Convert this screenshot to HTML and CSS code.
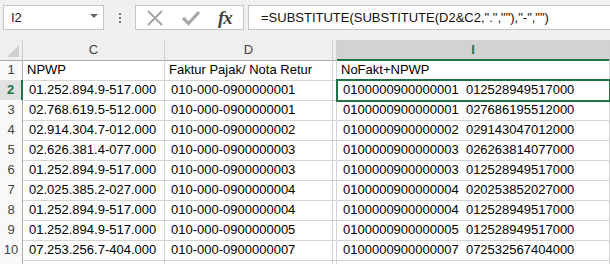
FILE: index.html
```html
<!DOCTYPE html>
<html lang="id">
<head>
    <meta charset="UTF-8">
    <title>SUBSTITUTE</title>
    <link rel="stylesheet" href="styles.css">
</head>
<body>
    <!-- formula bar -->
    <div class="formula-bar">
        <div class="name-box">
            <span>I2</span>
            <span class="caret"></span>
        </div>
        <div class="grip">
            <svg width="4" height="12" viewBox="0 0 4 12"><rect x="1" y="1" width="2" height="2" fill="#777"/><rect x="1" y="5" width="2" height="2" fill="#777"/><rect x="1" y="9" width="2" height="2" fill="#777"/></svg>
        </div>
        <div class="fx-buttons">
            <svg class="btn-x" width="18" height="18" viewBox="0 0 18 18"><path d="M2 2 L16 16 M16 2 L2 16" stroke="#a6a6a6" stroke-width="2" fill="none"/></svg>
            <svg class="btn-ok" width="20" height="18" viewBox="0 0 20 18"><path d="M2 9 L7.5 14.5 L18 3" stroke="#a6a6a6" stroke-width="3.2" fill="none"/></svg>
            <span class="fx">fx</span>
        </div>
        <div class="formula">=SUBSTITUTE(SUBSTITUTE(D2&amp;C2,".",""),"-","")</div>
    </div>

    <!-- sheet -->
    <div class="sheet">
        <div class="row head">
            <div class="corner"></div>
            <div class="col">C</div>
            <div class="col">D</div>
            <div class="hidden-cols"></div>
            <div class="col active">I</div>
        </div>
        <div class="row">
            <div class="rh">1</div>
            <div class="cell title">NPWP</div>
            <div class="cell title">Faktur Pajak/ Nota Retur</div>
            <div class="hidden-cols"></div>
            <div class="cell title">NoFakt+NPWP</div>
        </div>
        <div class="row">
            <div class="rh active">2</div>
            <div class="cell">01.252.894.9-517.000</div>
            <div class="cell">010-000-0900000001</div>
            <div class="hidden-cols"></div>
            <div class="cell selected">0100000900000001  012528949517000</div>
        </div>
        <div class="row">
            <div class="rh">3</div>
            <div class="cell">02.768.619.5-512.000</div>
            <div class="cell">010-000-0900000001</div>
            <div class="hidden-cols"></div>
            <div class="cell">0100000900000001  027686195512000</div>
        </div>
        <div class="row">
            <div class="rh">4</div>
            <div class="cell">02.914.304.7-012.000</div>
            <div class="cell">010-000-0900000002</div>
            <div class="hidden-cols"></div>
            <div class="cell">0100000900000002  029143047012000</div>
        </div>
        <div class="row">
            <div class="rh">5</div>
            <div class="cell">02.626.381.4-077.000</div>
            <div class="cell">010-000-0900000003</div>
            <div class="hidden-cols"></div>
            <div class="cell">0100000900000003  026263814077000</div>
        </div>
        <div class="row">
            <div class="rh">6</div>
            <div class="cell">01.252.894.9-517.000</div>
            <div class="cell">010-000-0900000003</div>
            <div class="hidden-cols"></div>
            <div class="cell">0100000900000003  012528949517000</div>
        </div>
        <div class="row">
            <div class="rh">7</div>
            <div class="cell">02.025.385.2-027.000</div>
            <div class="cell">010-000-0900000004</div>
            <div class="hidden-cols"></div>
            <div class="cell">0100000900000004  020253852027000</div>
        </div>
        <div class="row">
            <div class="rh">8</div>
            <div class="cell">01.252.894.9-517.000</div>
            <div class="cell">010-000-0900000004</div>
            <div class="hidden-cols"></div>
            <div class="cell">0100000900000004  012528949517000</div>
        </div>
        <div class="row">
            <div class="rh">9</div>
            <div class="cell">01.252.894.9-517.000</div>
            <div class="cell">010-000-0900000005</div>
            <div class="hidden-cols"></div>
            <div class="cell">0100000900000005  012528949517000</div>
        </div>
        <div class="row">
            <div class="rh">10</div>
            <div class="cell">07.253.256.7-404.000</div>
            <div class="cell">010-000-0900000007</div>
            <div class="hidden-cols"></div>
            <div class="cell">0100000900000007  072532567404000</div>
        </div>
        <!-- row 11 is cut by the window edge -->
        <div class="row">
            <div class="rh"></div>
            <div class="cell"></div>
            <div class="cell"></div>
            <div class="hidden-cols"></div>
            <div class="cell"></div>
        </div>
    </div>
</body>
</html>
```

FILE: styles.css
```css
body {
    margin: 0;
    background: #fff;
    font-family: "Liberation Sans", Arial, sans-serif;
    overflow: hidden;
}

/* formula bar */
.formula-bar {
    display: flex;
    align-items: flex-start;
    height: 40px;
    box-sizing: border-box;
    padding: 5px 0 0 3px;
    background: #f0f0f0;
}
.name-box {
    display: flex;
    align-items: center;
    justify-content: space-between;
    width: 101px;
    height: 25px;
    box-sizing: border-box;
    padding: 0 5px 0 7px;
    background: #fff;
    border: 1px solid #c6c6c6;
    font-size: 13px;
    color: #222;
}
.caret {
    width: 0;
    height: 0;
    border-left: 4px solid transparent;
    border-right: 4px solid transparent;
    border-top: 4px solid #666;
    margin-top: -3px;
}
.grip {
    display: flex;
    align-items: center;
    justify-content: center;
    width: 31px;
    height: 25px;
}
.fx-buttons {
    display: flex;
    align-items: center;
    width: 109px;
    height: 25px;
    box-sizing: border-box;
    padding-left: 10px;
    background: #fff;
    border: 1px solid #c6c6c6;
}
.btn-x {
    margin-right: 17px;
}
.btn-ok {
    margin-right: 17px;
}
.fx {
    font-family: "Liberation Serif", "Times New Roman", serif;
    font-style: italic;
    font-weight: bold;
    font-size: 19px;
    color: #444;
    letter-spacing: -1px;
}
.formula {
    flex: 1;
    height: 25px;
    box-sizing: border-box;
    margin-left: 4px;
    padding: 4px 0 0 12px;
    background: #fff;
    border: 1px solid #c6c6c6;
    border-right: none;
    font-size: 13px;
    color: #111;
    white-space: nowrap;
}

/* sheet */
.row {
    display: grid;
    grid-template-columns: 23px 142px 168px 4px 1fr;
    height: 20px;
}
.row > div {
    box-sizing: border-box;
    border-bottom: 1px solid #d4d4d4;
    border-right: 1px solid #d4d4d4;
}
.row.head > div {
    background: #efefef;
    border-bottom: 1px solid #ababab;
    border-right: 1px solid #d0d0d0;
}
.corner {
    position: relative;
}
.corner::after {
    content: "";
    position: absolute;
    right: 3px;
    bottom: 3px;
    width: 0;
    height: 0;
    border-left: 12px solid transparent;
    border-bottom: 12px solid #d0d0d0;
}
.col {
    text-align: center;
    font-size: 13px;
    line-height: 19px;
    color: #444;
}
.row.head .col.active {
    background: #d2d2d2;
    border-bottom: 2px solid #217346;
    color: #217346;
    font-weight: bold;
}
.rh {
    background: #f8f8f8;
    text-align: center;
    font-size: 13px;
    line-height: 20px;
    color: #444;
}
.row > .rh {
    border-right: 1px solid #ababab;
    border-bottom: 1px solid #dadada;
}
.row > .rh.active {
    background: #e1e1e1;
    border-right: 2px solid #217346;
    color: #217346;
    font-weight: bold;
}
.cell {
    padding: 0 0 0 6px;
    font-size: 13px;
    line-height: 20px;
    color: #000;
    white-space: pre;
    overflow: hidden;
}
.cell.title {
    padding-left: 4px;
}
.cell.selected {
    outline: 2px solid #217346;
    outline-offset: -1px;
    position: relative;
}
```
